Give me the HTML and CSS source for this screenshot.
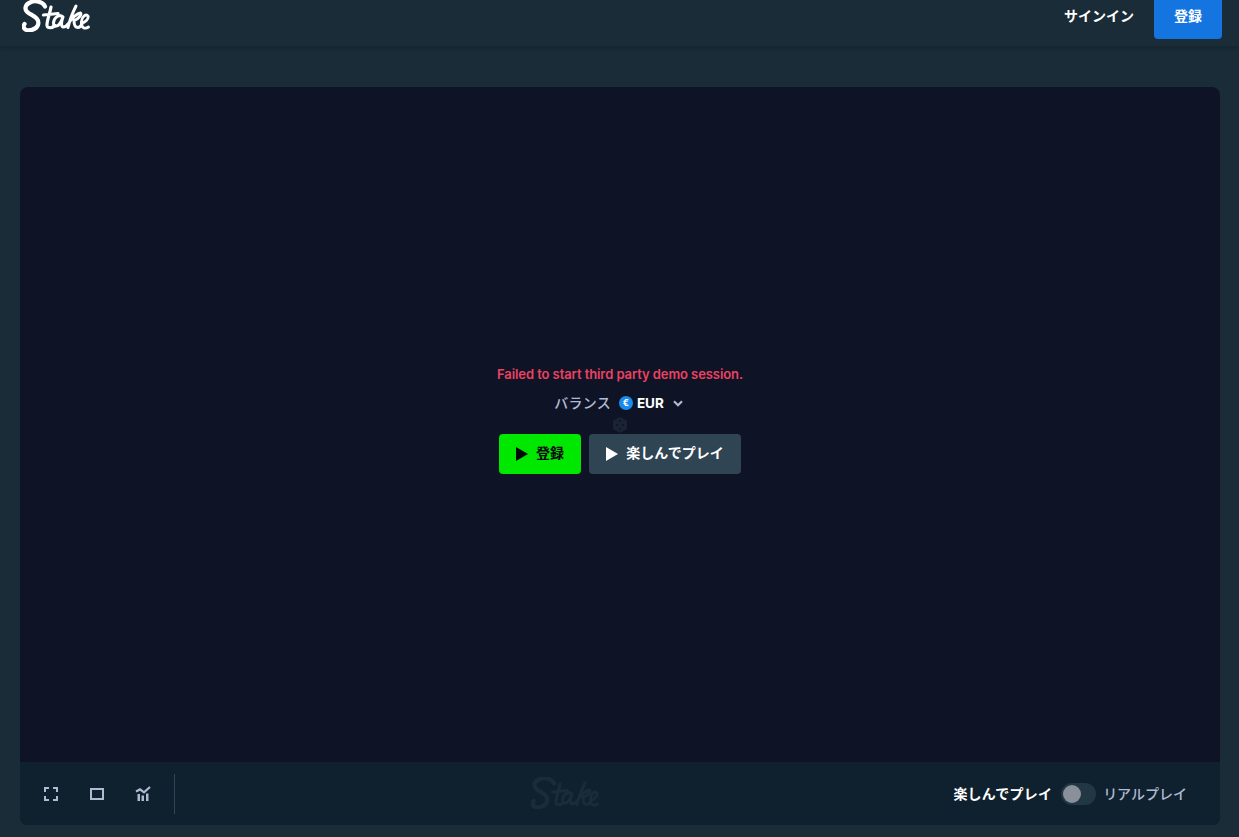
FILE: index.html
```html
<!DOCTYPE html>
<html lang="ja">
<head>
<meta charset="utf-8">
<title>Stake</title>
<link rel="stylesheet" href="styles.css">
</head>
<body>
<svg class="defs" width="0" height="0" aria-hidden="true">
  <symbol id="stake-logo" viewBox="0 0 68 32">
    <g fill="none" stroke="currentColor" stroke-linecap="round" stroke-linejoin="round">
      <path stroke-width="4.2" d="M23 6.5C21 1.5 13 0 8 2.5C2.5 5 2 10 6.5 13C11 16 18 18 16 25C14 30.5 6 31 3.5 29.5C1.5 28.5 1 26 2.5 24"/>
      <path stroke-width="3.2" d="M29 7C28 13 24.5 22 25 25.5C25.5 28.5 30 28.5 33 25.5M21.5 15L36 13.5"/>
      <path stroke-width="3" d="M41 17C37 13.5 32 17.5 31.5 23C31.5 27.5 36 27 38.5 22.5L41 17C39.5 21 38.5 27 41.5 27C43.5 27 45 25.5 46.5 23.5"/>
      <path stroke-width="3" d="M54 6C50.5 13 47.5 21 46 27.5M47.5 22C50 18 55 13.5 58.5 13C60 14 57.5 18.5 52 20.5C52 24 53 27.5 56 27.5C57.5 27.5 59 26 60 24"/>
      <path stroke-width="2.8" d="M59.5 23C63 22.5 67 19 66 16C64 13.5 60 16.5 59.5 21C58.5 28 63 29.5 66.5 27"/>
    </g>
  </symbol>
</svg>
<header class="topbar">
  <svg class="logo" width="68" height="32"><use href="#stake-logo"/></svg>
  <nav class="auth">
    <a class="signin">サインイン</a>
    <a class="register">登録</a>
  </nav>
</header>
<main class="page">
  <section class="card">
    <div class="stage">
      <p class="error">Failed to start third party demo session.</p>
      <div class="balance">
        <span class="balance-label">バランス</span>
        <span class="coin">€</span>
        <span class="currency">EUR</span>
        <svg class="chevron" width="10" height="7" viewBox="0 0 10 7"><path d="M1 1.2L5 5.2L9 1.2" fill="none" stroke="currentColor" stroke-width="2.2"/></svg>
      </div>
      <svg class="dice" width="16" height="16" viewBox="0 0 16 16"><path d="M8 0L15 3.6V12L8 16L1 12V3.6Z" fill="#1a2333"/><g fill="#0e1425"><circle cx="5" cy="8" r="1"/><circle cx="8" cy="4" r="1"/><circle cx="11" cy="8" r="1"/><circle cx="8" cy="12" r="1"/></g></svg>
      <div class="actions">
        <button class="btn btn-green">
          <svg class="play" width="12" height="14" viewBox="0 0 12 14"><path d="M0 0L12 7L0 14Z" fill="currentColor"/></svg>
          <span class="btn-label">登録</span>
        </button>
        <button class="btn btn-slate">
          <svg class="play" width="12" height="14" viewBox="0 0 12 14"><path d="M0 0L12 7L0 14Z" fill="currentColor"/></svg>
          <span class="btn-label">楽しんでプレイ</span>
        </button>
      </div>
    </div>
    <footer class="toolbar">
      <div class="tools">
        <svg class="tool" width="16" height="16" viewBox="0 0 16 16" fill="none" stroke="currentColor" stroke-width="2"><path d="M2 6V2H6M10 2H14V6M14 10V14H10M6 14H2V10"/></svg>
        <svg class="tool" width="16" height="16" viewBox="0 0 16 16" fill="none" stroke="currentColor" stroke-width="2"><rect x="2" y="3" width="12" height="10"/></svg>
        <svg class="tool" width="16" height="16" viewBox="0 0 16 16"><path d="M1 5.4L5 3.4L9 6.4L15 1" fill="none" stroke="currentColor" stroke-width="2.2"/><path d="M2.5 8H5V15H2.5ZM6.5 9.5H9V15H6.5ZM11 7.5H13.5V15H11Z" fill="currentColor"/></svg>
      </div>
      <span class="divider"></span>
      <svg class="watermark" width="68" height="32"><use href="#stake-logo"/></svg>
      <div class="mode">
        <span class="mode-on">楽しんでプレイ</span>
        <span class="switch"><span class="knob"></span></span>
        <span class="mode-off">リアルプレイ</span>
      </div>
    </footer>
  </section>
</main>
</body>
</html>
```
FILE: styles.css
```css
* { box-sizing: border-box; }
html, body { height: 100%; }
body {
  margin: 0;
  height: 837px;
  overflow: hidden;
  background: #1a2c38;
  font-family: "Noto Sans", "Noto Sans CJK JP", sans-serif;
  display: flex;
  flex-direction: column;
}
.defs { position: absolute; }
.topbar {
  height: 46px;
  flex: none;
  display: flex;
  justify-content: space-between;
  align-items: flex-start;
  padding: 0 17px 0 22px;
  background: #1a2c38;
  box-shadow: 0 2px 4px rgba(0, 0, 0, 0.2);
}
.logo { color: #fff; display: block; }
.auth { display: flex; align-items: center; gap: 20px; height: 39px; }
.signin, .register {
  font: 700 14px/1 "Noto Sans CJK JP", sans-serif;
  color: #fff;
  padding-bottom: 10px;
}
.signin { width: 70px; white-space: nowrap; }
.register {
  width: 68px;
  height: 39px;
  display: flex;
  align-items: center;
  justify-content: center;
  background: #1475e1;
  border-radius: 0 0 4px 4px;
}
.page { flex: 1; padding: 41px 19px 12px 20px; display: flex; min-height: 0; }
.card {
  flex: 1;
  display: flex;
  flex-direction: column;
  border-radius: 8px;
  overflow: hidden;
  background: #0e1425;
}
.stage {
  flex: 1;
  display: flex;
  flex-direction: column;
  align-items: center;
  padding-top: 278px;
  min-height: 0;
}
.error {
  margin: 0;
  font-family: Inter, sans-serif;
  font-size: 13px;
  line-height: 18px;
  font-weight: 600;
  letter-spacing: -0.08px;
  color: #ed4163;
}
.balance {
  margin-top: 11px;
  height: 18px;
  display: flex;
  align-items: center;
  font-size: 14px;
  font-weight: 500;
  color: #b1bad3;
}
.balance-label { font-family: "Noto Sans CJK JP", sans-serif; letter-spacing: 0.25px; padding-bottom: 3px; }
.coin {
  width: 14px;
  height: 14px;
  margin-left: 8px;
  border-radius: 50%;
  background: #1a8cf0;
  color: #fff;
  font: 700 9px/14px Inter, sans-serif;
  text-align: center;
}
.currency { margin-left: 4px; font: 700 13.5px/18px Inter, sans-serif; color: #fff; }
.chevron { margin: 0 3px 0 9px; color: #b1bad3; }
.dice { margin-top: 5px; display: block; }
.actions { margin-top: 1px; display: flex; gap: 8px; }
.btn {
  height: 40px;
  border: 0;
  border-radius: 4px;
  display: flex;
  align-items: center;
  justify-content: center;
  gap: 8px;
  font: 700 14px/1 "Noto Sans CJK JP", sans-serif;
}
.btn-label { padding-bottom: 4px; }
.btn-green { width: 82px; background: #00e700; color: #05080a; }
.btn-slate { width: 152px; background: #2f4553; color: #fff; }
.play { display: block; }
.toolbar {
  height: 63px;
  flex: none;
  background: #0f212e;
  display: flex;
  align-items: center;
  position: relative;
  padding: 0 33px 0 23px;
}
.tools { display: flex; gap: 30px; color: #b1bad3; }
.tool { display: block; }
.divider { width: 1px; height: 40px; margin-left: 23px; background: #2f4553; }
.watermark {
  position: absolute;
  left: 511px;
  top: 15px;
  color: #1a2c38;
}
.mode {
  margin-left: auto;
  display: flex;
  align-items: center;
  font: 700 14px/1 "Noto Sans CJK JP", sans-serif;
}
.mode-on { color: #fff; letter-spacing: 0.2px; padding-bottom: 1px; }
.mode-off { color: #b1bad3; font-weight: 500; margin-left: 7px; padding-bottom: 1px; }
.switch {
  width: 35px;
  height: 22px;
  margin-left: 9px;
  border-radius: 11px;
  background: #213743;
  display: flex;
  align-items: center;
  padding-left: 2px;
}
.knob { width: 18px; height: 18px; border-radius: 50%; background: #8a9099; }
```
